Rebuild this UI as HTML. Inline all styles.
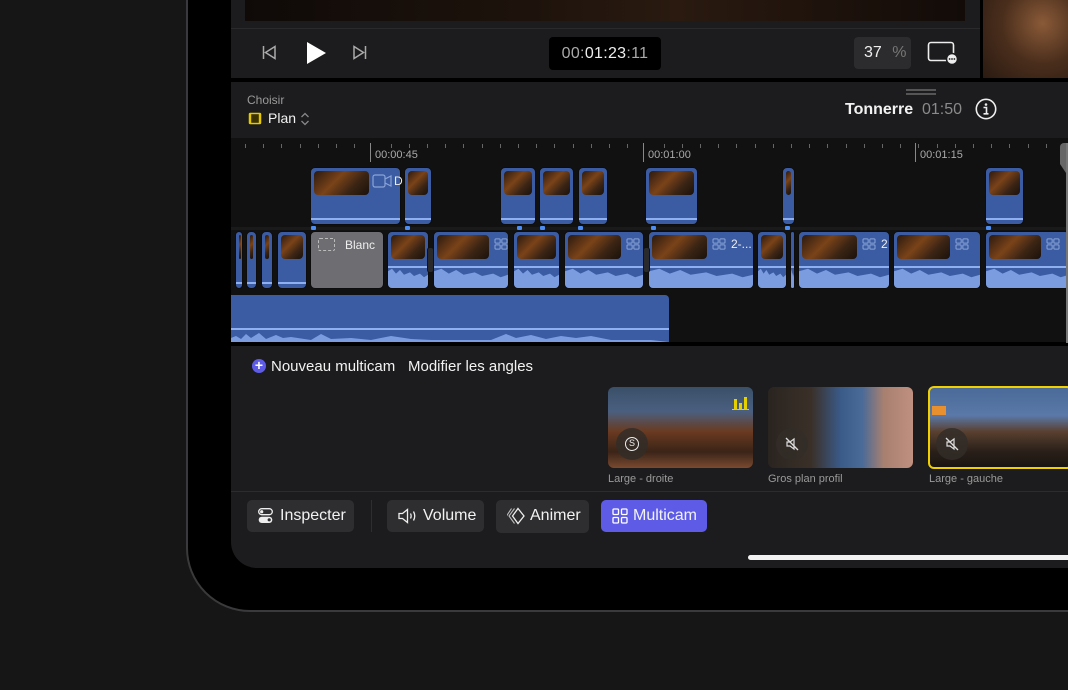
<!DOCTYPE html>
<html><head><meta charset="utf-8"><style>
*{margin:0;padding:0;box-sizing:border-box}
body{width:1068px;height:690px;background:#161616;position:relative;overflow:hidden;font-family:"Liberation Sans",sans-serif;color:#fff}
.a{position:absolute}
.clip{position:absolute;background:#3b5ca3;border:1.5px solid #0d0d0d;border-radius:5px;overflow:hidden}
.clip .th{position:absolute;left:3px;top:3px;height:24px;border-radius:4px;background:linear-gradient(135deg,#2a1a10,#7a4318 40%,#3a2414 70%,#1a110b)}
.clip .ln{position:absolute;left:0;right:0;height:2px;background:#8fb0f0}
.clip .wv{position:absolute;left:0;right:0;bottom:0;background:#7b9de0}
.dot{position:absolute;width:5px;height:4px;background:#4d8cf0;border-radius:1px;top:226px}
.btn{position:absolute;top:500px;height:32px;border-radius:5px;background:#2e2e30;font-size:16px;line-height:32px;color:#f2f2f2}
.mc{position:absolute;width:14px;height:12px}
</style></head><body>
<!-- device frame -->
<div class="a" style="left:186px;top:-40px;width:1000px;height:652px;border:2px solid #3a3a3c;border-radius:0 0 0 64px;background:#000"></div>
<div class="a" style="left:231px;top:0;width:900px;height:568px;background:#1c1c1e;border-radius:0 0 0 26px;overflow:hidden">
</div>
<!-- viewer -->
<div class="a" style="left:245px;top:0;width:720px;height:21px;background:linear-gradient(90deg,#0f0a08,#1e130c 40%,#2a1a10 60%,#120b08)"></div>
<div class="a" style="left:231px;top:28px;width:749px;height:1px;background:#2a2a2c"></div>
<div class="a" style="left:980px;top:0;width:3px;height:80px;background:#000"></div>
<div class="a" style="left:983px;top:0;width:85px;height:78px;background:radial-gradient(circle at 70% 30%,#8a5a38,#4a2e1c 50%,#2a1a12)"></div>
<svg class="a" style="left:262px;top:45px" width="14" height="15" viewBox="0 0 14 15"><path d="M1.5 1v13M13 1.5L3.5 7.5 13 13.5z" stroke="#aaa" stroke-width="1.5" fill="none"/></svg>
<svg class="a" style="left:305px;top:41px" width="22" height="24" viewBox="0 0 22 24"><path d="M2 1L21 12 2 23z" fill="#fff"/></svg>
<svg class="a" style="left:353px;top:45px" width="14" height="15" viewBox="0 0 14 15"><path d="M12.5 1v13M1 1.5L10.5 7.5 1 13.5z" stroke="#aaa" stroke-width="1.5" fill="none"/></svg>
<div class="a" style="left:549px;top:37px;width:112px;height:33px;background:#000;border-radius:4px;font-size:16px;line-height:33px;text-align:center;color:#aaa;letter-spacing:.3px">00:<span style="color:#eee">01:23</span>:11</div>
<div class="a" style="left:854px;top:37px;width:57px;height:32px;background:#2c2c2e;border-radius:4px;font-size:16px;line-height:32px;color:#eee;padding-left:10px">37 <span style="color:#777;margin-left:6px">%</span></div>
<svg class="a" style="left:927px;top:41px" width="32" height="24" viewBox="0 0 32 24"><rect x="1.5" y="1.5" width="25" height="18" rx="2.5" stroke="#eee" stroke-width="1.6" fill="none"/><circle cx="25" cy="18" r="5.5" fill="#eee" stroke="#1c1c1e" stroke-width="1.5"/><circle cx="22.6" cy="18" r=".9" fill="#1c1c1e"/><circle cx="25" cy="18" r=".9" fill="#1c1c1e"/><circle cx="27.4" cy="18" r=".9" fill="#1c1c1e"/></svg>
<div class="a" style="left:231px;top:78px;width:837px;height:4px;background:#000"></div>
<!-- header -->
<div class="a" style="left:906px;top:89px;width:30px;height:2px;background:#555"></div>
<div class="a" style="left:906px;top:93px;width:30px;height:2px;background:#555"></div>
<div class="a" style="left:247px;top:93px;font-size:12px;color:#9a9a9a">Choisir</div>
<svg class="a" style="left:248px;top:112px" width="14" height="13" viewBox="0 0 14 13"><rect x=".75" y=".75" width="12.5" height="11.5" rx="1.5" fill="#e5c800"/><rect x="3.2" y="2.2" width="7.6" height="8.6" fill="#3a3200"/></svg>
<div class="a" style="left:268px;top:110px;font-size:14px;color:#f2f2f2">Plan</div>
<svg class="a" style="left:300px;top:112px" width="10" height="14" viewBox="0 0 10 14"><path d="M1.5 5L5 1.5 8.5 5M1.5 9L5 12.5 8.5 9" stroke="#888" stroke-width="1.3" fill="none"/></svg>
<div class="a" style="left:845px;top:101px;font-size:16px;font-weight:bold;color:#f2f2f2">Tonnerre</div>
<div class="a" style="left:922px;top:101px;font-size:16px;color:#8a8a8a">01:50</div>
<svg class="a" style="left:975px;top:98px" width="22" height="22" viewBox="0 0 22 22"><circle cx="11" cy="11" r="9.7" stroke="#eee" stroke-width="1.6" fill="none"/><circle cx="11" cy="6.5" r="1.3" fill="#eee"/><path d="M8.5 9.5h3v6M8.5 15.8h5" stroke="#eee" stroke-width="1.6" fill="none"/></svg>
<!-- timeline -->
<div class="a" style="left:231px;top:138px;width:837px;height:207px;background:#111112"></div>
<div id="ticks"></div>
<div class="a" style="left:370px;top:143px;width:1px;height:19px;background:#888"></div>
<div class="a" style="left:375px;top:149px;font-size:11px;color:#aaa">00:00:45</div>
<div class="a" style="left:643px;top:143px;width:1px;height:19px;background:#888"></div>
<div class="a" style="left:648px;top:149px;font-size:11px;color:#aaa">00:01:00</div>
<div class="a" style="left:915px;top:143px;width:1px;height:19px;background:#888"></div>
<div class="a" style="left:920px;top:149px;font-size:11px;color:#aaa">00:01:15</div>
<div class="a" style="left:231px;top:227px;width:837px;height:3px;background:#1a1a1b"></div>
<div id="clips"></div>
<!-- audio track -->
<div class="a" style="left:231px;top:295px;width:438px;height:47px;background:#3b5ca3;border-radius:0 4px 0 0"></div>
<div class="a" style="left:231px;top:328px;width:438px;height:1.5px;background:#8fb0f0"></div>
<svg class="a" style="left:231px;top:330px" width="438" height="12"><path d="M0 12 L0 8 5 6 10 9 15 4 20 8 28 3 35 9 45 5 52 8 60 7 80 10 90 4 100 9 120 8 140 10 160 6 180 9 200 10 260 10 275 4 285 8 300 5 315 9 330 6 345 8 360 6 380 10 420 10 438 12Z" fill="#7b9de0"/></svg>
<div class="a" style="left:231px;top:342px;width:837px;height:4px;background:#000"></div>
<!-- lower panel -->
<div class="a" style="left:252px;top:359px;width:14px;height:14px;border-radius:50%;background:#5e5ce6;color:#fff;font-size:14px;line-height:13px;text-align:center;font-weight:bold">+</div>
<div class="a" style="left:271px;top:358px;font-size:15px;color:#f2f2f2">Nouveau multicam</div>
<div class="a" style="left:408px;top:358px;font-size:15px;color:#f2f2f2">Modifier les angles</div>
<div class="a" style="left:608px;top:387px;width:145px;height:81px;border-radius:6px;background:linear-gradient(180deg,#3a5068 0%,#4a5f80 30%,#6a3a20 55%,#3a2418 80%,#7a4a30);overflow:hidden">
<div class="a" style="left:126px;top:12px;width:3px;height:10px;background:#e5d000"></div><div class="a" style="left:131px;top:16px;width:3px;height:6px;background:#e5d000"></div><div class="a" style="left:136px;top:10px;width:3px;height:12px;background:#e5d000"></div><div class="a" style="left:124px;top:22px;width:17px;height:1px;background:#e5d000"></div>
<div class="a" style="left:8px;top:41px;width:32px;height:32px;border-radius:50%;background:rgba(50,45,40,.85)"></div>
<div class="a" style="left:17px;top:50px;width:14px;height:14px;border-radius:50%;border:1.5px solid #eee;font-size:9px;line-height:11px;text-align:center;color:#eee">S</div></div>
<div class="a" style="left:768px;top:387px;width:145px;height:81px;border-radius:6px;background:linear-gradient(90deg,#2a2420 0%,#3a3028 30%,#3a5a88 50%,#4a6a98 65%,#a88070 80%,#c09080 100%);overflow:hidden">
<div class="a" style="left:8px;top:41px;width:32px;height:32px;border-radius:50%;background:rgba(50,45,40,.85)"></div>
<svg class="a" style="left:16px;top:49px" width="16" height="16" viewBox="0 0 16 16"><path d="M3 6h3l4-3v10l-4-3H3z" stroke="#ddd" stroke-width="1.2" fill="none"/><path d="M2 2l12 12" stroke="#ddd" stroke-width="1.3"/></svg></div>
<div class="a" style="left:928px;top:386px;width:145px;height:83px;border-radius:6px;border:2.5px solid #f0d000;background:linear-gradient(180deg,#4a6a98 0%,#5a78a8 35%,#5a4030 55%,#2a201a 80%,#1a1410);overflow:hidden">
<div class="a" style="left:2px;top:18px;width:14px;height:9px;background:#e89030"></div>
<div class="a" style="left:6px;top:40px;width:32px;height:32px;border-radius:50%;background:rgba(50,45,40,.85)"></div>
<svg class="a" style="left:14px;top:48px" width="16" height="16" viewBox="0 0 16 16"><path d="M3 6h3l4-3v10l-4-3H3z" stroke="#ddd" stroke-width="1.2" fill="none"/><path d="M2 2l12 12" stroke="#ddd" stroke-width="1.3"/></svg></div>
<div class="a" style="left:608px;top:473px;font-size:11px;color:#9a9a9a">Large - droite</div>
<div class="a" style="left:768px;top:473px;font-size:11px;color:#9a9a9a">Gros plan profil</div>
<div class="a" style="left:929px;top:473px;font-size:11px;color:#9a9a9a">Large - gauche</div>
<div class="a" style="left:231px;top:491px;width:837px;height:1px;background:#2c2c2e"></div>
<!-- toolbar -->
<div class="btn" style="left:247px;width:107px;padding-left:33px">Inspecter</div>
<svg class="a" style="left:258px;top:508px" width="15" height="16" viewBox="0 0 15 16"><rect x=".7" y=".7" width="13.6" height="6" rx="3" stroke="#eee" stroke-width="1.3" fill="none"/><circle cx="3.7" cy="3.7" r="1.6" fill="#eee"/><rect x=".7" y="8.7" width="13.6" height="6.3" rx="3.1" fill="#eee"/><circle cx="11.2" cy="11.8" r="1.6" fill="#2e2e30"/></svg>
<div class="a" style="left:371px;top:500px;width:1px;height:32px;background:#2e2e30"></div>
<div class="btn" style="left:387px;width:97px;padding-left:36px">Volume</div>
<svg class="a" style="left:398px;top:508px" width="20" height="16" viewBox="0 0 20 16"><path d="M1 5.5h3.5l5-4v13l-5-4H1z" stroke="#eee" stroke-width="1.3" fill="none"/><path d="M12.5 5.5q1.3 2.5 0 5M15.5 3.5q2.5 4.5 0 9" stroke="#eee" stroke-width="1.3" fill="none"/></svg>
<div class="btn" style="left:496px;width:93px;padding-left:34px;height:33px">Animer</div>
<svg class="a" style="left:507px;top:507px" width="18" height="18" viewBox="0 0 18 18"><path d="M11 1.5L17 9 11 16.5 5.5 9z" stroke="#eee" stroke-width="1.3" fill="none"/><path d="M7.5 1.5L2 9l5.5 7.5M4.5 1.5L-.5 9" stroke="#bbb" stroke-width="1.1" fill="none"/></svg>
<div class="btn" style="left:601px;width:106px;padding-left:32px;background:#5e5ce6">Multicam</div>
<svg class="a" style="left:612px;top:508px" width="16" height="16" viewBox="0 0 16 16" fill="none" stroke="#fff" stroke-width="1.3"><rect x="1" y="1" width="5.5" height="5.5" rx="1"/><rect x="9.5" y="1" width="5.5" height="5.5" rx="1"/><rect x="1" y="9.5" width="5.5" height="5.5" rx="1"/><rect x="9.5" y="9.5" width="5.5" height="5.5" rx="1"/></svg>
<div class="a" style="left:748px;top:555px;width:330px;height:5px;border-radius:3px;background:#f2f2f2"></div>
<!-- playhead -->
<div class="a" style="left:1060px;top:143px;width:10px;height:30px;background:#666;border-radius:4px 0 0 0;clip-path:polygon(0 0,100% 0,100% 100%,60% 100%,0 70%)"></div>
<div class="a" style="left:1066px;top:143px;width:2px;height:200px;background:#777"></div>
<script>
var t='',x;for(x=245;x<1060;x+=18.2){if(Math.abs(x-370)>3&&Math.abs(x-643)>3&&Math.abs(x-915)>3)t+='<div class="a" style="left:'+Math.round(x)+'px;top:144px;width:1px;height:4px;background:#666"></div>';}
document.getElementById('ticks').innerHTML=t;
var c='';
function clip(l,r,top,h,o){o=o||{};var w=r-l;var s='<div class="clip" style="left:'+l+'px;top:'+top+'px;width:'+w+'px;height:'+h+'px;'+(o.bg?'background:'+o.bg+';':'')+'">';
if(!o.blank){var tw=o.tw||Math.max(2,w-8);s+='<div class="th" style="width:'+tw+'px;"></div>';}
if(o.multi){s+='<svg class="mc" style="left:'+(o.tw+8)+'px;top:6px" width="16" height="14" viewBox="0 0 16 14" fill="none" stroke="#8aa4d8" stroke-width="1.2"><rect x="1" y="1" width="6" height="5" rx="1"/><rect x="9" y="1" width="6" height="5" rx="1"/><rect x="1" y="8" width="6" height="5" rx="1"/><rect x="9" y="8" width="6" height="5" rx="1"/></svg>';if(o.lab)s+='<div class="a" style="left:'+(o.tw+27)+'px;top:5px;font-size:12px;color:#eee">'+o.lab+'</div>';}
if(o.wave){s+='<div class="ln" style="top:'+(h-24)+'px"></div><div class="wv" style="height:'+(h-34)+'px;top:auto;clip-path:polygon(0 30%,10% 20%,20% 40%,30% 25%,40% 45%,55% 35%,65% 50%,80% 40%,90% 55%,100% 45%,100% 100%,0 100%)"></div>';}
else if(!o.blank){s+='<div class="ln" style="bottom:4px"></div>';}
s+='</div>';c+=s;}
// upper track
[[310,401,55],[404,432],[500,536],[539,574],[578,608],[645,698],[782,795],[985,1024]].forEach(function(a){clip(a[0],a[1],167,58,{tw:a[2]});});
c+='<svg class="a" style="left:372px;top:174px" width="20" height="14" viewBox="0 0 20 14" fill="none" stroke="#8aa4d8" stroke-width="1.2"><rect x="1" y="1" width="12" height="12" rx="2"/><path d="M13 5l6-3v10l-6-3"/></svg><div class="a" style="left:394px;top:174px;font-size:12px;color:#eee">D</div>';
[311,405,517,540,578,651,785,986].forEach(function(x){c+='<div class="dot" style="left:'+x+'px"></div>';});
// main track
clip(235,243,231,58);clip(246,257,231,58);clip(261,273,231,58);clip(277,307,231,58);
clip(310,384,231,58,{blank:1,bg:'#6e6e72'});
clip(387,429,231,58,{wave:1});
clip(433,509,231,58,{wave:1,multi:1,tw:52});
clip(513,560,231,58,{wave:1});
clip(564,644,231,58,{wave:1,multi:1,tw:53});
clip(648,754,231,58,{wave:1,multi:1,tw:55,lab:'2-...'});
clip(757,787,231,58,{wave:1});clip(790,795,231,58,{wave:1});
clip(798,890,231,58,{wave:1,multi:1,tw:55,lab:'2'});
clip(893,981,231,58,{wave:1,multi:1,tw:53});
clip(985,1070,231,58,{wave:1,multi:1,tw:52});
c+='<div class="a" style="left:318px;top:238px;width:17px;height:13px;border:1.3px dashed #bbb;border-radius:2px"></div><div class="a" style="left:345px;top:238px;font-size:12px;color:#eee">Blanc</div>';
c+='<div class="a" style="left:427px;top:247px;width:7px;height:26px;background:#2a2a2c;border-radius:3px;border:1px solid #111"></div>';
c+='<div class="a" style="left:643px;top:247px;width:7px;height:26px;background:#2a2a2c;border-radius:3px;border:1px solid #111"></div>';
document.getElementById('clips').innerHTML=c;
</script>
</body></html>
